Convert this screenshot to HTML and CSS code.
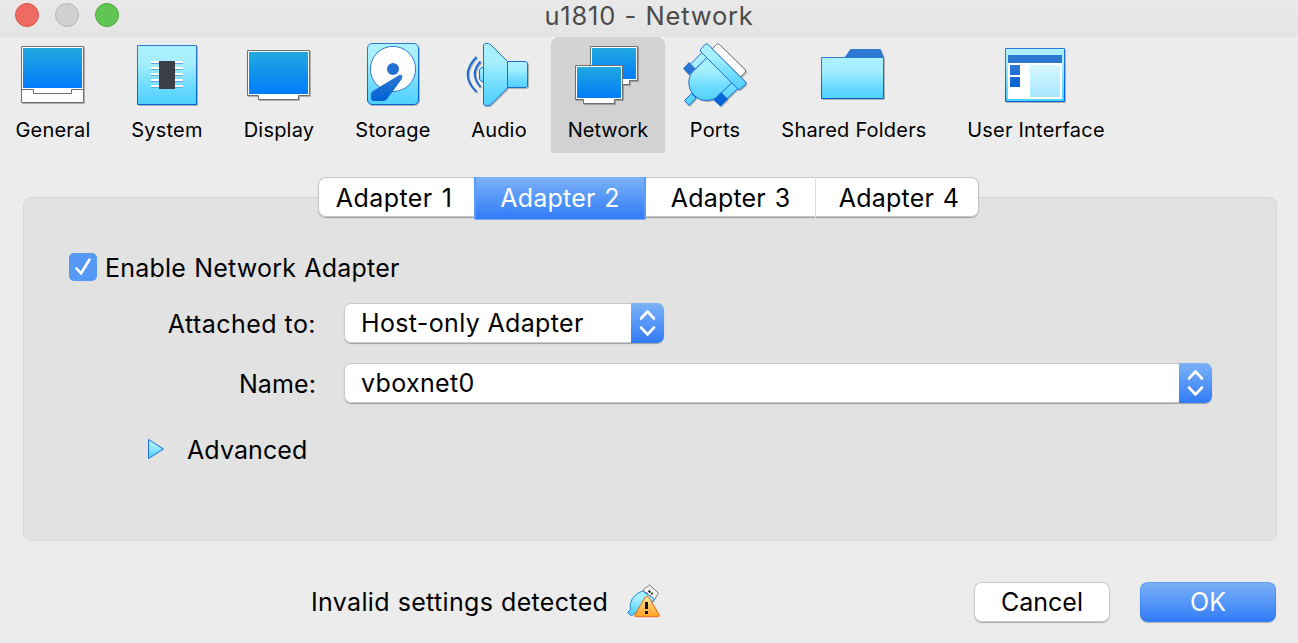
FILE: index.html
```html
<!DOCTYPE html>
<html lang="en">
<head>
<meta charset="utf-8">
<title>u1810 - Network</title>
<link rel="stylesheet" href="styles.css">
</head>
<body>
<svg class="defs" width="0" height="0" aria-hidden="true">
  <defs>
    <linearGradient id="screen" x1="0" y1="0" x2="0" y2="1"><stop offset="0" stop-color="#22a9e0"/><stop offset="1" stop-color="#007cfa"/></linearGradient>
    <linearGradient id="cyan" x1="0" y1="0" x2="0" y2="1"><stop offset="0" stop-color="#adf1ff"/><stop offset=".3" stop-color="#a5efff"/><stop offset=".75" stop-color="#66d9ff"/><stop offset="1" stop-color="#50d0ff"/></linearGradient>
    <linearGradient id="edge" x1="0" y1="0" x2="0" y2="1"><stop offset="0" stop-color="#3079d3"/><stop offset="1" stop-color="#0062d5"/></linearGradient>
    <linearGradient id="pane" x1="0" y1="0" x2="0" y2="1"><stop offset="0" stop-color="#d7f7ff"/><stop offset="1" stop-color="#a6e7ff"/></linearGradient>
    <linearGradient id="warn" x1="0" y1="0" x2="0" y2="1"><stop offset="0" stop-color="#ffe9a0"/><stop offset="1" stop-color="#ffa21f"/></linearGradient>
  </defs>
</svg>
<div class="window">
  <header class="titlebar">
    <div class="lights"><i class="light close"></i><i class="light minimize"></i><i class="light zoom"></i></div>
    <h1 class="title">u1810 - Network</h1>
  </header>

  <nav class="toolbar">
    <a class="tool">
      <svg class="icon" viewBox="20 42 66 66"><path d="M21.5 46.5h62v56h-62z" fill="#fff" stroke="#6f6f6f"/><path d="M23 48h59v40H23z" fill="url(#screen)"/><path d="M21.5 89.500h12v4h38v-4h12" fill="none" stroke="#6f6f6f"/></svg>
      <span class="tool-label">General</span>
    </a>
    <a class="tool">
      <svg class="icon" viewBox="134 42 66 66"><path d="M137.5 45.5h59v59h-59z" fill="url(#cyan)" stroke="url(#edge)"/><path d="M151 62h32M151 68h32M151 74h32M151 80h32M151 86h32" stroke="#fff" stroke-width="2"/><path d="M151 63.5h32M151 69.5h32M151 75.5h32M151 81.5h32M151 87.5h32" stroke="#6aa9d2"/><path d="M159 61h16v28h-16z" fill="#3a3e49"/></svg>
      <span class="tool-label">System</span>
    </a>
    <a class="tool">
      <svg class="icon" viewBox="246 42 66 66"><path d="M247.5 50.5h62v45h-11v4h-40v-4h-11z" fill="#fff" stroke="#6f6f6f"/><path d="M249 52h59v42h-59z" fill="url(#screen)"/></svg>
      <span class="tool-label">Display</span>
    </a>
    <a class="tool">
      <svg class="icon" viewBox="360 42 66 66"><rect x="367.5" y="43.5" width="51" height="61" rx="4.5" fill="url(#cyan)" stroke="url(#edge)"/><circle cx="393" cy="69" r="22.6" fill="#fff" stroke="#3079d3"/><circle cx="393" cy="69" r="6" fill="#2370d3"/><path d="M397.500 76q3.500-2 4.500-.5q1 1.500-.5 4L387 99q-1.500 2-3.500 2H374q-3 0-3-3v-4q0-1.500 2-3z" fill="url(#edge)"/></svg>
      <span class="tool-label">Storage</span>
    </a>
    <a class="tool">
      <svg class="icon" viewBox="466 42 66 66"><path d="M483.500 67.500h-2l-2 2.500v9l2 2.500h2M507.500 61.500h18.500l1.500 1.500v23l-1.500 1.500h-18.500" fill="url(#cyan)" stroke="#1c6cd3"/><path d="M483.500 45l1.500-1.500h3.500l2 1 17 17v26.500l-16.500 16.500q-1.500 1.200-3 1.200h-3l-1.500-1.500z" fill="url(#cyan)" stroke="#1c6cd3"/><path d="M480.500 61.500q-11.500 12.500 0 25.500M476.500 57q-17.500 17.500 0 35" fill="none" stroke="#1c6cd3" stroke-width="2"/></svg>
      <span class="tool-label">Audio</span>
    </a>
    <a class="tool selected">
      <svg class="icon" viewBox="575 42 66 66"><path d="M590.500 46.500h47v34h-8v4h-30v-4h-9z" fill="#fff" stroke="#6f6f6f"/><path d="M592 48h44v31h-44z" fill="url(#screen)"/><path d="M575.500 65.500h47v34h-8v4h-31v-4h-8z" fill="#fff" stroke="#6f6f6f"/><path d="M577 67h44v31h-44z" fill="url(#screen)"/></svg>
      <span class="tool-label">Network</span>
    </a>
    <a class="tool">
      <svg class="icon" viewBox="682 42 66 66"><path d="M712 49l4.500-4.500q1.500-1.500 3 0L745 69.500q1.500 1.500 0 3L740.500 77z" fill="#fff" stroke="#6f6f6f"/><path d="M703 51.500L689.500 65l5 5L708 57zM732.500 81l-13 13 6 6 14-13zM684.500 100.500l7-7 4.500 4.500-7 7.500z" fill="url(#cyan)" stroke="#1c6cd3"/><path d="M707.500 57L694 70.500c-4 4-5.500 8-5 13.500q0 5 3 9l4 4q4.500 3.500 10 3.500 7.500 0 12.500-4.500L732.500 82z" fill="url(#cyan)" stroke="#1c6cd3"/><path d="M689 62l6.500 6.500-6.500 6.500-6-6.500zM721 92l7 7-7.500 7.500-7-6.500z" fill="url(#edge)"/><path d="M700.500 49.500l4.500-5q1.500-1.500 3 0l37.500 37.500q1 1.200 0 2.500l-5 4.500q-1.500 1.200-2.700 0L700.500 51.500z" fill="url(#cyan)" stroke="#1c6cd3"/></svg>
      <span class="tool-label">Ports</span>
    </a>
    <a class="tool">
      <svg class="icon" viewBox="821 42 66 66"><path d="M844.500 57.500l6-8.500h30l3.500 8.500z" fill="#3079d3"/><path d="M821.500 57.500h62v41h-62z" fill="url(#cyan)" stroke="url(#edge)"/></svg>
      <span class="tool-label">Shared Folders</span>
    </a>
    <a class="tool">
      <svg class="icon" viewBox="1003 42 66 66"><path d="M1005.500 48.500h59v53h-59z" fill="url(#cyan)" stroke="url(#edge)"/><path d="M1008 55h54v44h-54z" fill="#fff"/><path d="M1008 55h54v8h-54z" fill="#2f78d2"/><path d="M1010 65h10v10h-10zM1010 77h10v10h-10z" fill="url(#edge)"/><path d="M1030 65h30v32h-30z" fill="url(#pane)"/></svg>
      <span class="tool-label">User Interface</span>
    </a>
  </nav>

  <main class="content">
    <div class="tabs">
      <button class="tab first">Adapter 1</button>
      <button class="tab active">Adapter 2</button>
      <button class="tab">Adapter 3</button>
      <button class="tab">Adapter 4</button>
    </div>
    <section class="group">
      <div class="enable">
        <span class="checkbox"><svg width="28" height="28" viewBox="0 0 28 28"><path d="M7.500 15.500l4.500 5 8.500-14" fill="none" stroke="#fff" stroke-width="2.600" stroke-linecap="round" stroke-linejoin="round"/></svg></span>
        <span class="enable-label">Enable Network Adapter</span>
      </div>
      <div class="row">
        <span class="label attached">Attached to:</span>
        <div class="select short"><span class="value host">Host-only Adapter</span><span class="stepper"><svg width="32" height="40" viewBox="0 0 32 40"><path d="M10 15.500l6.500-7 6.500 7M10 24.500l6.500 7 6.500-7" fill="none" stroke="#fff" stroke-width="2.600" stroke-linecap="round" stroke-linejoin="round"/></svg></span></div>
      </div>
      <div class="row">
        <span class="label">Name:</span>
        <div class="select long"><span class="value vbox">vboxnet0</span><span class="stepper"><svg width="32" height="40" viewBox="0 0 32 40"><path d="M10 15.500l6.500-7 6.500 7M10 24.500l6.500 7 6.500-7" fill="none" stroke="#fff" stroke-width="2.600" stroke-linecap="round" stroke-linejoin="round"/></svg></span></div>
      </div>
      <div class="advanced">
        <svg width="18" height="22" viewBox="0 0 18 22"><path d="M1.500 .5v19L16.500 10z" fill="url(#cyan)" stroke="#1c70d8"/></svg>
        <span>Advanced</span>
      </div>
    </section>
  </main>

  <footer class="footer">
    <span class="status">Invalid settings detected</span>
    <svg class="status-icon" width="34" height="34" viewBox="627 584 34 34"><path d="M643 590l6.500-5 9 8-5.500 9z" fill="#f6f6f6" stroke="#777"/><path d="M648.500 590.500l2 2M651 594l2-1M646 593.500h1.500M649.500 596h1" stroke="#333" stroke-width="1.800"/><path d="M642.500 591l12 8-12 14h-8l-3 3-4-3.500 3-3q-1.500-8 4-13.500 3.500-3.500 8-5z" fill="url(#cyan)" stroke="#2287d8"/><path d="M645 597.500q2-3 4 0l10 17q1 2.200-1.500 2.200H636.500q-2.500 0-1.500-2.200z" fill="url(#warn)" stroke="#e8641b"/><path d="M646.500 602v7M646.500 611v3" stroke="#111" stroke-width="3"/></svg>
    <div class="buttons"><button class="button">Cancel</button><button class="button primary">OK</button></div>
  </footer>
</div>
</body>
</html>
```
FILE: styles.css
```css
* { box-sizing: border-box; }
body { margin: 0; font-family: Inter, "Open Sans", sans-serif; color: #000; background: #ececec; }
button { font: inherit; color: inherit; border: 0; padding: 0; background: none; }
.defs { display: block; height: 0; }
.window { width: 1298px; height: 643px; overflow: hidden; background: #ececec; display: flex; flex-direction: column; font-size: 25px; }

.titlebar { height: 37px; flex: none; background: linear-gradient(#e9e9e9, #e4e4e4); display: grid; }
.lights { grid-area: 1 / 1; display: flex; gap: 16px; padding: 3px 0 0 15px; }
.light { width: 24px; height: 24px; border-radius: 50%; border: 1px solid; }
.close { background: #ed6b60; border-color: #d9554c; }
.minimize { background: #d0d0d0; border-color: #b5b5b5; }
.zoom { background: #61c554; border-color: #51a73e; }
.title { grid-area: 1 / 1; margin: 0; text-align: center; font-size: 25.5px; font-weight: 400; letter-spacing: .8px; word-spacing: .5px; line-height: 32px; color: #4b4b4b; }

.toolbar { height: 116px; flex: none; display: grid; grid-template-columns: 106px 122px 102px 126px 86px 9px 114px 100px 178px 186px; }
.tool { display: flex; flex-direction: column; align-items: center; padding-top: 5px; }
.tool.selected { grid-column: 7; background: #d2d2d2; border-radius: 8px 8px 0 0; }
.icon { width: 66px; height: 66px; flex: none; filter: drop-shadow(1px 1px 0 rgba(0, 0, 0, .25)); }
.tool-label { font-size: 20px; line-height: 28px; margin-top: 8px; letter-spacing: .2px; white-space: nowrap; }
.selected .tool-label { letter-spacing: .05px; }

.content { flex: none; padding: 24px 21px 0 23px; }
.tabs { width: 661px; height: 40px; margin-left: 295px; display: grid; grid-template-columns: 156px 172px 169px 164px; position: relative; background: #fff; border-radius: 8px; box-shadow: inset 0 0 0 1px #c6c6c6, 0 1px 1px #a0a0a0; }
.tab { line-height: 42px; white-space: nowrap; letter-spacing: .2px; word-spacing: 1.5px; }
.tab.first { letter-spacing: .45px; padding-right: 4px; }
.tab.active { color: #fff; background: linear-gradient(#7cb2f6, #307bf8); box-shadow: inset 2px 0 #5a9cf6, inset -2px 0 #5a9cf6, 0 1px #7fa9e8; }
.tab:last-child { box-shadow: inset 1px 0 #dcdcdc; padding-left: 4px; }
.group { height: 344px; margin-top: -20px; background: #e2e2e2; border: 1px solid #d8d8d8; border-radius: 8px; padding: 55px 0 0 45px; }
.enable { display: flex; height: 28px; gap: 8px; }
.checkbox { width: 28px; height: 28px; border-radius: 5px; background: #5699f4; }
.enable-label { line-height: 30px; letter-spacing: .2px; word-spacing: 1px; }
.row { display: flex; height: 40px; margin-top: 20px; gap: 28px; }
.enable + .row { margin-top: 22px; }
.label { width: 247px; text-align: right; line-height: 42px; letter-spacing: .1px; }
.attached { letter-spacing: .45px; }
.select { display: flex; justify-content: space-between; background: #fff; border-radius: 7px; box-shadow: inset 0 0 0 1px #c9c9c9, 0 1px 1px #a0a0a0; overflow: hidden; }
.short { width: 320px; }
.long { width: 868px; }
.value { padding-left: 17px; line-height: 40px; letter-spacing: .35px; }
.stepper { width: 33px; background: linear-gradient(#7cb2f6, #307bf8); }
.advanced { display: flex; gap: 22px; align-items: center; height: 34px; margin: 30px 0 0 78px; letter-spacing: .1px; }

.footer { display: flex; padding: 41px 22px 0 311px; height: 102px; }
.status { line-height: 41px; width: 316px; letter-spacing: .33px; word-spacing: .5px; white-space: nowrap; }
.status-icon { margin-top: 2px; }
.buttons { margin-left: auto; display: flex; gap: 30px; }
.button { width: 136px; height: 40px; line-height: 40px; background: #fff; border-radius: 8px; box-shadow: inset 0 0 0 1px #cbcbcb, 0 1px 1px #a9a9a9; }
.primary { color: #fff; background: linear-gradient(#7cb2f6, #307bf8); box-shadow: inset 0 0 0 1px rgba(60, 125, 245, .4), 0 1px 1px #b4b4b4; }
```
